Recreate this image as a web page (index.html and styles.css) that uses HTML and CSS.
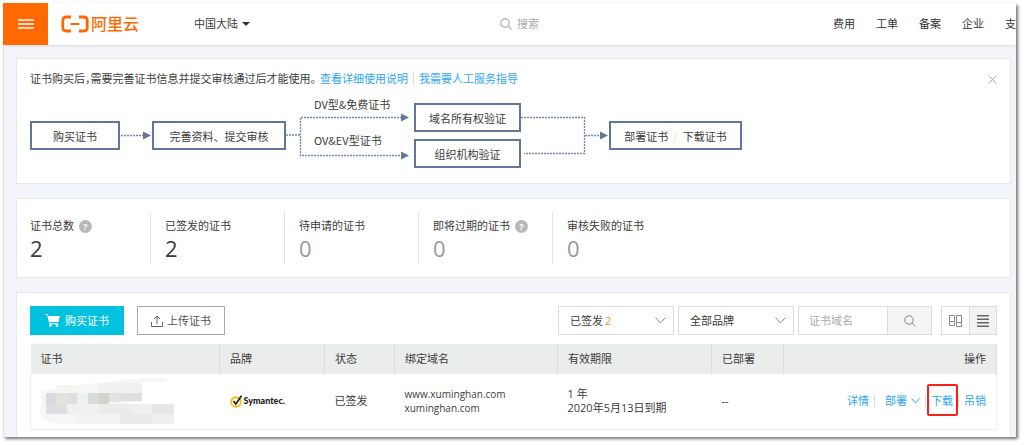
FILE: index.html
```html
<!DOCTYPE html>
<html lang="zh-CN">
<head>
<meta charset="utf-8">
<title>阿里云 SSL 证书</title>
<link rel="stylesheet" href="styles.css">
</head>
<body>
<div class="frame">
  <header class="topbar">
    <button class="menu" type="button" aria-label="菜单"><svg width="16" height="10" viewBox="0 0 16 10"><path d="M0 1h16M0 5h16M0 9h16" stroke="#fff" stroke-width="1.700"/></svg></button>
    <a class="logo" href="#"><svg width="28" height="18" viewBox="0 0 28 18" fill="none" stroke="#ff6a00"><path d="M10 2H5.500Q1.800 2 1.800 5V13Q1.800 16 5.500 16H10M18 2H22.500Q26.200 2 26.200 5V13Q26.200 16 22.500 16H18" stroke-width="2.800"/><path d="M9.500 9h9" stroke-width="2"/></svg><span>阿里云</span></a>
    <button class="region" type="button">中国大陆<svg width="8" height="4" viewBox="0 0 8 4"><path d="M0 0h8L4 4z" fill="#333"/></svg></button>
    <label class="search"><svg width="12" height="12" viewBox="0 0 12 12" fill="none" stroke="#bbb" stroke-width="1.400"><circle cx="5" cy="5" r="4.200"/><path d="M8 8l3.500 3.500"/></svg><input type="text" placeholder="搜索" aria-label="搜索"></label>
    <nav class="nav"><a href="#">费用</a><a href="#">工单</a><a href="#">备案</a><a href="#">企业</a><a href="#">支</a></nav>
  </header>

  <main class="content">
    <section class="card">
      <div class="notice">
        <span class="notice-text">证书购买后，需要完善证书信息并提交审核通过后才能使用。</span>
        <a href="#">查看详细使用说明</a><i class="sep"></i><a href="#">我需要人工服务指导</a>
        <button class="close" type="button" aria-label="关闭"><svg width="9" height="9" viewBox="0 0 9 9"><path d="M.5.500l8 8M8.500.500l-8 8" stroke="#aaa"/></svg></button>
      </div>
      <div class="flow">
        <svg class="wires" width="712" height="75" viewBox="0 0 712 75">
          <g fill="none" stroke="#7389ad" stroke-width="1.300" stroke-dasharray="2 1">
            <path d="M91 39.500h22"/><path d="M256 39h14M372 21.500H270.500v38H372"/>
            <path d="M491 21.500h63.500v36H494M555 39.500h16"/>
          </g>
          <path d="M113 35.500l8 4-8 4zM371 17.500l8 4-8 4zM371 55.500l8 4-8 4zM570 35.500l8 4-8 4z" fill="#607799"/>
        </svg>
        <div class="node buy">购买证书</div>
        <div class="node submit">完善资料、提交审核</div>
        <span class="branch dv">DV型&amp;免费证书</span>
        <span class="branch ov">OV&amp;EV型证书</span>
        <div class="node domain">域名所有权验证</div>
        <div class="node org">组织机构验证</div>
        <div class="node deploy">部署证书<i>/</i>下载证书</div>
      </div>
    </section>

    <section class="card stats">
      <div class="stat"><span>证书总数<b class="help">?</b></span><strong>2</strong></div>
      <div class="stat"><span>已签发的证书</span><strong>2</strong></div>
      <div class="stat zero"><span>待申请的证书</span><strong>0</strong></div>
      <div class="stat zero"><span>即将过期的证书<b class="help">?</b></span><strong>0</strong></div>
      <div class="stat zero"><span>审核失败的证书</span><strong>0</strong></div>
    </section>

    <section class="card list">
      <div class="toolbar">
        <button class="btn primary" type="button"><svg width="15" height="13" viewBox="0 0 15 13"><path d="M0 0h2.800l.6 2H15l-1.700 6H5l.4 1.300h7.800v1H4.500L2.100 1H0z" fill="#fff"/><circle cx="5.500" cy="11.600" r="1.300" fill="#fff"/><circle cx="12" cy="11.600" r="1.300" fill="#fff"/></svg>购买证书</button>
        <button class="btn" type="button"><svg width="12" height="12" viewBox="0 0 12 12" fill="none" stroke="#666"><path d="M6 9V1M3 4l3-3 3 3M.5 7v4.500h11V7"/></svg>上传证书</button>
        <div class="filters">
          <div class="pick"><select aria-label="状态"><option>已签发</option></select><em>2</em><svg width="11" height="7" viewBox="0 0 11 7"><path d="M.5.500l5 5.500 5-5.500" fill="none" stroke="#888"/></svg></div>
          <div class="pick"><select aria-label="品牌"><option>全部品牌</option></select><svg width="11" height="7" viewBox="0 0 11 7"><path d="M.5.500l5 5.500 5-5.500" fill="none" stroke="#888"/></svg></div>
          <div class="find"><input type="text" placeholder="证书域名" aria-label="证书域名"><button type="button" aria-label="查找"><svg width="12" height="12" viewBox="0 0 12 12" fill="none" stroke="#888"><circle cx="5" cy="5" r="4.200"/><path d="M8 8l3.500 3.500"/></svg></button></div>
          <div class="views">
            <button type="button" aria-label="卡片视图"><svg width="13" height="12" viewBox="0 0 13 12" fill="none" stroke="#888"><path d="M.5.500h5v6h-5zM7.500.500h5v7h-5zM.5 6.500v4h5v-4M7.500 7.500v4h5v-4"/></svg></button>
            <button class="on" type="button" aria-label="列表视图"><svg width="12" height="12" viewBox="0 0 12 12"><path d="M0 .7h12M0 4.200h12M0 7.700h12M0 11.200h12" stroke="#666" stroke-width="1.400"/></svg></button>
          </div>
        </div>
      </div>
      <table>
        <colgroup><col class="c-cert"><col class="c-brand"><col class="c-state"><col class="c-domain"><col class="c-valid"><col class="c-deployed"><col></colgroup>
        <thead><tr><th>证书</th><th>品牌</th><th>状态</th><th>绑定域名</th><th>有效期限</th><th>已部署</th><th class="end">操作</th></tr></thead>
        <tbody><tr>
          <td class="masked"><svg width="138" height="48" viewBox="0 0 138 48">
            <path d="M2 14Q30 8 60 6Q100 0 125 1L133 4L103 5V24L80 27H64L135 28V47H20Q4 46 1 36Q0 28 4 25Q0 20 2 14z" fill="#f6f6f6"/>
            <path d="M17 8h21v8H17z" fill="#f5f4ef"/><path d="M60 6h43v10H60z" fill="#f1f1f1"/>
            <path d="M7 16h10v11H7z" fill="#d9dadb"/><path d="M17 16h11v11H17z" fill="#e4e2dc"/><path d="M28 16h10v11H28z" fill="#dddfe4"/><path d="M38 16h11v11H38z" fill="#eeeff0"/><path d="M49 16h11v11H49z" fill="#d9dbda"/><path d="M60 16h10v11H60z" fill="#d2d2cd"/><path d="M70 16h12v9H70z" fill="#e2e2e2"/><path d="M82 16h21v8H82z" fill="#dfdfdf"/>
            <path d="M7 27h21v10H7z" fill="#dedfe2"/><path d="M28 27h32v10H28z" fill="#f0f0f0"/><path d="M60 27h32v10H60z" fill="#ebebeb"/><path d="M92 27h21v10H92z" fill="#efefef"/><path d="M113 27h22v10h-22z" fill="#e6e6e6"/>
            <path d="M38 37h43v10H38z" fill="#f2f2f2"/><path d="M81 37h32v10H81z" fill="#eaeaea"/><path d="M113 37h22v10h-22z" fill="#efefef"/>
          </svg></td>
          <td><span class="brand"><svg width="13" height="13" viewBox="0 0 13 13" fill="none"><circle cx="6" cy="7" r="4.800" stroke="#fdbb11" stroke-width="1.900"/><path d="M3.500 6l2.300 3L11.500.800" stroke="#222" stroke-width="1.700"/></svg>Symantec.</span></td>
          <td>已签发</td>
          <td class="hosts">www.xuminghan.com<br>xuminghan.com</td>
          <td>1 年<br>2020年5月13日到期</td>
          <td>--</td>
          <td class="end"><div class="actions"><a href="#">详情</a><i class="sep"></i><a class="more" href="#">部署<svg width="9" height="6" viewBox="0 0 9 6"><path d="M.5.500l4 4.500 4-4.500" fill="none" stroke="#2ea7f5"/></svg></a><i class="sep"></i><a class="marked" href="#">下载</a><i class="sep"></i><a href="#">吊销</a></div></td>
        </tr></tbody>
      </table>
    </section>
  </main>
</div>
</body>
</html>
```
FILE: styles.css
```css
* { box-sizing: border-box; }
body {
  margin: 0;
  padding: 3px 8px 8px 3px;
  background: #fff;
  color: #3c3c3c;
  font: 11px/16px "Open Sans", "Noto Sans CJK SC", sans-serif;
}
button, input, select { font: inherit; color: inherit; margin: 0; padding: 0; border: 0; background: none; border-radius: 0; outline: 0; }
svg { display: block; flex: none; }
a { color: #2ea7f5; text-decoration: none; }
i, em { font-style: normal; }

.frame { overflow: hidden; background: #f4f5fa; box-shadow: 2px 2px 3px #777; }
.topbar { position: relative; display: flex; align-items: center; height: 42px; background: #fff; box-shadow: 0 1px 3px #d9dbe0; }
.menu { display: flex; align-items: center; justify-content: center; width: 45px; height: 42px; background: #ff6a00; }
.logo { display: flex; align-items: center; gap: 2px; margin-left: 13px; color: #ff6a00; font-size: 16px; font-weight: 500; }
.region { display: flex; align-items: center; gap: 4px; margin-left: 55px; }
.search { display: flex; align-items: center; gap: 5px; margin: 0 auto; }
.search input { width: 66px; }
input::placeholder { color: #aaa; opacity: 1; }
.nav { display: flex; gap: 21px; }
.nav a { color: #333; }

.content { display: flex; flex-direction: column; gap: 14px; padding: 13px 5px 0 12px; border-left: 1px solid #dfe0e5; }
.card { padding: 12px 13px; background: #fff; border: 1px solid #e8e9ec; }

.notice { display: flex; align-items: center; }
.notice-text { margin-right: 4px; font-feature-settings: "halt"; }
.sep { width: 1px; height: 12px; margin: 0 5px; background: #d8dade; }
.close { margin-left: auto; }

.flow { position: relative; height: 75px; margin-top: 9px; font-family: "Noto Sans CJK SC", sans-serif; }
.wires { position: absolute; left: 0; top: 0; }
.node { position: absolute; display: flex; align-items: center; justify-content: center; height: 29px; border: 2px solid #607799; }
.node i { margin: 0 5px; color: #ddd; }
.buy { left: 0; top: 25px; width: 90px; }
.submit { left: 122px; top: 25px; width: 134px; }
.domain { left: 384px; top: 7px; width: 107px; }
.org { left: 384px; top: 43px; width: 107px; }
.deploy { left: 579px; top: 25px; width: 133px; }
.branch { position: absolute; left: 284px; }
.dv { top: 0; }
.ov { top: 36px; }

.stats { display: flex; padding: 13px; }
.stat { flex: 0 0 134px; height: 52px; padding-left: 14px; border-left: 1px solid #e4e5e8; }
.stat:first-child { flex-basis: 120px; padding-left: 0; border-left: 0; }
.stat span { display: flex; align-items: center; height: 24px; padding-top: 4px; }
.stat strong { display: block; font-size: 22px; line-height: 24px; font-weight: 400; }
.zero strong { color: #999; }
.help { width: 13px; height: 13px; margin-left: 5px; border-radius: 50%; background: #b8b8b8; color: #fff; font-size: 9px; line-height: 13px; text-align: center; }

.list { padding: 13px 13px 7px; border-bottom: 0; }
.toolbar { display: flex; gap: 13px; margin-bottom: 9px; }
.btn { display: flex; align-items: center; justify-content: center; gap: 4px; width: 88px; height: 29px; border: 1px solid #aaa; color: #555; }
.primary { gap: 5px; width: 94px; border: 0; background: #00c1de; color: #fff; }
.filters { display: flex; gap: 4px; margin-left: auto; }
.pick { position: relative; width: 116px; }
.pick select { width: 100%; height: 29px; padding-left: 11px; border: 1px solid #ddd; appearance: none; background: #fff; }
.pick em { position: absolute; left: 47px; top: 7px; color: #ff8a1e; }
.pick svg { position: absolute; right: 8px; top: 11px; pointer-events: none; }
.find { display: flex; width: 134px; border: 1px solid #ddd; }
.find input { flex: 1; min-width: 0; padding-left: 10px; }
.find button { display: flex; align-items: center; justify-content: center; width: 44px; border-left: 1px solid #ddd; background: #f4f4f4; }
.views { display: flex; width: 56px; margin-left: 5px; border: 1px solid #ddd; }
.views button { display: flex; flex: 1; align-items: center; justify-content: center; }
.views .on { border-left: 1px solid #ddd; background: #f2f2f2; }

table { width: 100%; table-layout: fixed; border-collapse: collapse; }
.c-cert { width: 189px; }
.c-brand { width: 105px; }
.c-state { width: 70px; }
.c-domain { width: 163px; }
.c-valid { width: 154px; }
.c-deployed { width: 72px; }
th { height: 30px; padding: 0 10px; background: #ebecec; border-right: 1px solid #dcdddd; font-weight: 400; text-align: left; }
td { height: 55px; padding: 0 10px; border-bottom: 1px solid #eee; line-height: 14px; }
td:first-child { border-left: 1px solid #eee; }
td:last-child { border-right: 1px solid #eee; }
.end { text-align: right; }
td.masked { padding: 0 8px; }
.hosts { font-size: 10px; }
.brand { display: flex; align-items: center; gap: 1px; color: #222; font: 900 9px/14px Lato, sans-serif; }
.actions { display: flex; align-items: center; justify-content: flex-end; }
.more { display: flex; align-items: center; gap: 4px; margin-left: 5px; }
.marked { position: relative; }
.marked::after { content: ""; position: absolute; inset: -10px -5px -8px -4px; border: 2px solid #f5221b; border-radius: 2px; }
```
